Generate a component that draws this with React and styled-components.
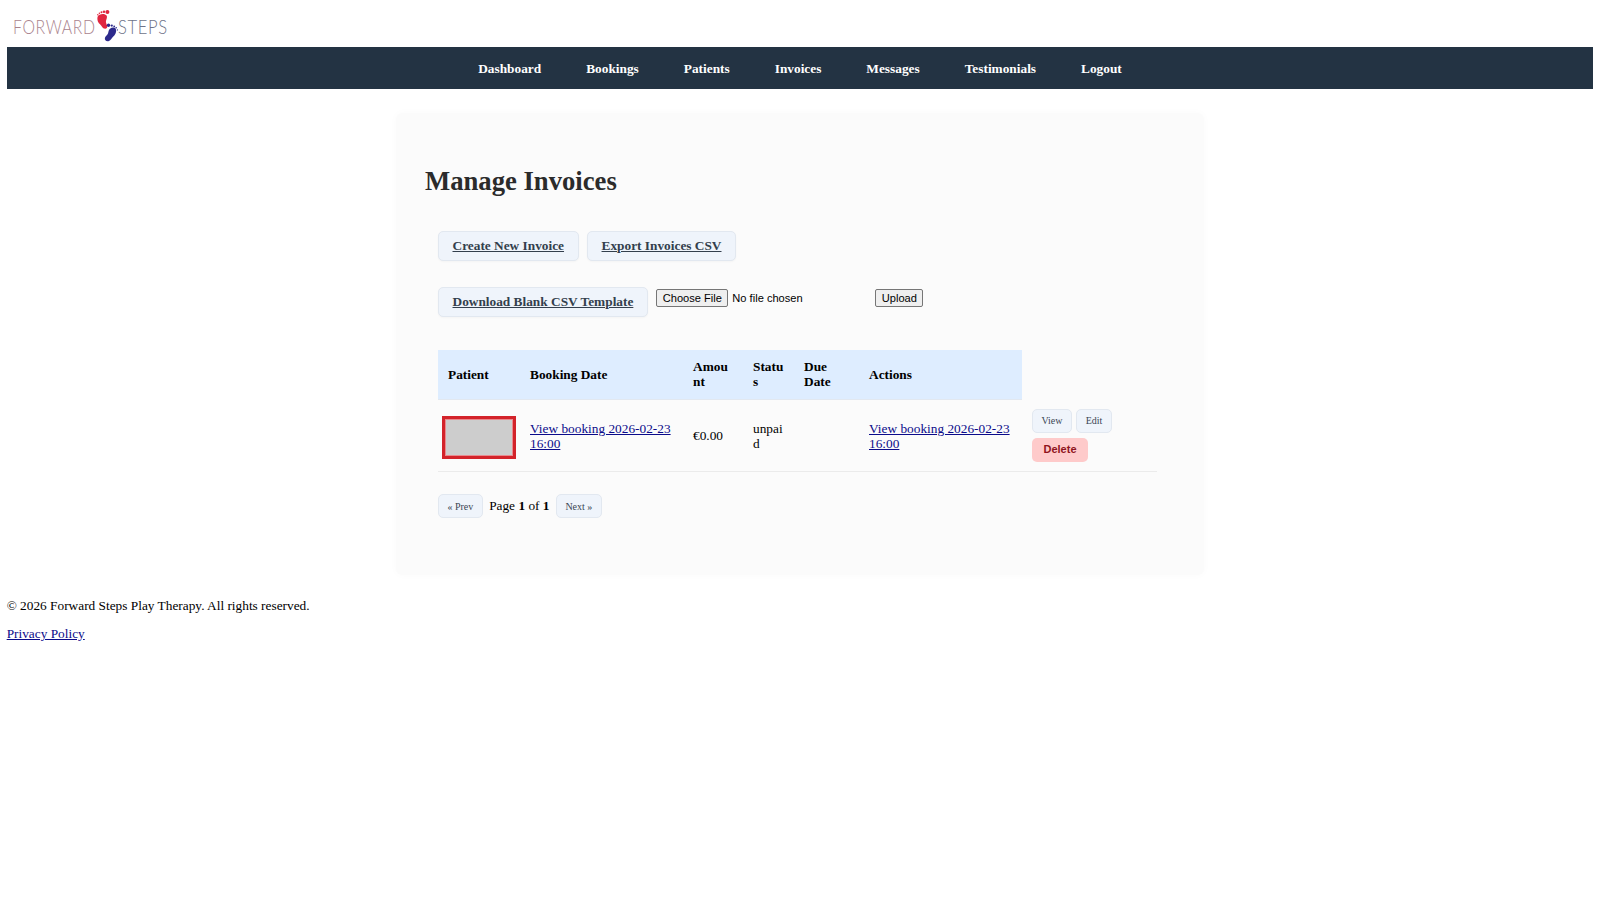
import React from 'react';
import styled, { createGlobalStyle } from 'styled-components';

const GlobalStyle = createGlobalStyle`
  html, body {
    margin: 0;
    padding: 0;
    background: #fff;
  }
  body {
    padding: 0 6.67px;
    font-family: "Liberation Serif", "Times New Roman", serif;
    font-size: 13.33px;
    color: #000;
  }
  a {
    color: #0b0b8a;
  }
`;

const Brand = styled.header`
  height: 47px;
  display: flex;
  align-items: flex-start;
  padding-left: 6px;
`;

const BrandWord = styled.span`
  display: block;
  width: ${p => p.$width};
  flex: none;
  font-family: Lato, "Open Sans", sans-serif;
  font-weight: 300;
  font-size: 20px;
  line-height: 20px;
  letter-spacing: 0.8px;
  white-space: nowrap;
  margin-top: 16px;
  color: ${p => p.$color};
  transform: scaleX(${p => p.$squeeze});
  transform-origin: left center;
`;

const BrandFeet = styled.svg`
  width: 22px;
  height: 34px;
  margin-top: 9px;
  flex: none;
`;

const Nav = styled.nav`
  height: 42px;
  background: #233343;
  display: flex;
  justify-content: center;
  align-items: center;
  padding-top: 1px;
  box-sizing: border-box;
  gap: 45px;
`;

const NavItem = styled.a`
  color: #fff;
  font-weight: 700;
  font-size: 13.33px;
  text-decoration: none;
`;

const Panel = styled.main`
  box-sizing: border-box;
  width: 808px;
  height: 462px;
  margin: 24px auto 0;
  padding: 52px 30px 0;
  background: #fbfbfb;
  box-shadow: 0 0 8px rgba(0, 0, 0, 0.025);
  border-radius: 6px;
`;

const Title = styled.h1`
  margin: 0 0 0 -1px;
  font-size: 26.67px;
  line-height: 32px;
  font-weight: 700;
  color: #2b2b2b;
`;

const Actions = styled.div`
  margin: ${p => p.$top} 0 0 12px;
  display: flex;
  gap: 8.5px;
  align-items: flex-start;
`;

const LinkButton = styled.a`
  box-sizing: border-box;
  height: 30px;
  padding: 0 13.5px;
  display: inline-flex;
  align-items: center;
  background: #eff4fb;
  border: 1px solid #e2e8f0;
  border-radius: 5px;
  color: #333f4d;
  font-weight: 700;
  font-size: 13.33px;
  text-decoration: underline;
  box-shadow: 0 1px 2px rgba(0, 0, 0, 0.03);
`;

const UploadForm = styled.form`
  display: flex;
  align-items: flex-start;
  padding-top: 2px;
`;

const FileInput = styled.input`
  width: 219px;
  font-family: "Liberation Sans", Arial, sans-serif;
  font-size: 11.1px;
  color: #000;

  &::file-selector-button {
    font-family: "Liberation Sans", Arial, sans-serif;
    font-size: 11.1px;
    height: 18px;
    width: 72px;
    padding: 0;
    margin-right: 4px;
    background: #efefef;
    border: 1px solid #767676;
    border-radius: 2px;
    color: #000;
  }
`;

const UploadButton = styled.button`
  box-sizing: border-box;
  width: 48px;
  height: 18px;
  padding: 0;
  font-family: "Liberation Sans", Arial, sans-serif;
  font-size: 11.1px;
  background: #efefef;
  border: 1px solid #767676;
  border-radius: 2px;
  color: #000;
`;

const Table = styled.table`
  table-layout: fixed;
  border-collapse: collapse;
  width: 719px;
  margin: 32.5px 0 0 12px;
`;

const HeadCell = styled.th`
  height: 50px;
  padding: 0 10px;
  box-sizing: border-box;
  background: #deedff;
  border-bottom: 1px solid #e2e8f0;
  text-align: left;
  vertical-align: middle;
  font-size: 13.33px;
  line-height: 15px;
  font-weight: 700;
  color: #000;
  word-break: ${p => (p.$tight ? 'break-all' : 'normal')};
`;

const BlankHead = styled.th`
  padding: 0;
`;

const Cell = styled.td`
  height: 72px;
  padding: 0 10px;
  box-sizing: border-box;
  border-bottom: 1px solid #ebebeb;
  vertical-align: middle;
  font-size: 13.33px;
  line-height: 15px;
  word-break: ${p => (p.$tight ? 'break-all' : 'normal')};
`;

const PatientCell = styled(Cell)`
  padding: 3px 4px 0;
`;

const Placeholder = styled.div`
  box-sizing: border-box;
  width: 74px;
  height: 43px;
  background: #cdcdcd;
  border: 3px solid #d3232a;
  box-shadow: inset 0 0 0 1px #e98a8e;
`;

const RowTools = styled.div`
  display: flex;
  flex-wrap: wrap;
  gap: 5px 4.5px;
  width: 90px;
`;

const SmallButton = styled.a`
  box-sizing: border-box;
  height: 24px;
  padding: 0 8.4px;
  display: inline-flex;
  align-items: center;
  background: #eff4fb;
  border: 1px solid #e2e8f0;
  border-radius: 5px;
  font-size: 10px;
  color: #3b4654;
  text-decoration: none;
`;

const DangerButton = styled.a`
  box-sizing: border-box;
  width: 56px;
  height: 24px;
  display: inline-flex;
  align-items: center;
  justify-content: center;
  background: #fecaca;
  border-radius: 5px;
  font-family: "Liberation Sans", Arial, sans-serif;
  font-size: 11px;
  font-weight: 700;
  color: #8f1420;
`;

const Pager = styled.div`
  margin: 22px 0 0 12px;
  display: flex;
  align-items: center;
  gap: 6.5px;
  font-size: 13.33px;
`;

const Footer = styled.footer`
  margin-top: 23px;
  font-size: 13.33px;
  line-height: 15px;
`;

const FooterLine = styled.p`
  margin: 0 0 13px;
`;

const navItems = ['Dashboard', 'Bookings', 'Patients', 'Invoices', 'Messages', 'Testimonials', 'Logout'];
const colWidths = [82, 163, 60, 51, 65, 163, 135];

function Feet() {
  return (
    <BrandFeet viewBox="0 0 22 34" aria-hidden="true">
      <g fill="#e0263f">
        <path d="M1.6 7.8 C2.6 4.6 9 4 10.6 6.6 C11.8 8.8 9.6 11.2 10 13.6 C10.4 15.6 12 17 11 18.8 C9.8 20.6 7 19.8 6 17.8 C5 15.8 3 15 2 12.8 C1.4 11.2 1.2 9.2 1.6 7.8 Z" />
        <circle cx="11.4" cy="2.9" r="2" />
        <circle cx="8" cy="2.8" r="1.2" />
        <circle cx="5.5" cy="3.2" r="1" />
        <circle cx="3.4" cy="4.3" r="0.8" />
        <circle cx="1.8" cy="5.8" r="0.7" />
      </g>
      <g fill="#2d2a8c">
        <path d="M19.8 20 C21 23 19 26.2 16.8 28 C15.6 29 15.2 31 13 32 C10.4 32.8 8.4 31.2 8.9 29 C9.3 27.2 11.2 26.4 12 24.6 C12.6 23 12.4 21.2 14 19.8 C15.8 18.2 18.8 18 19.8 20 Z" />
        <circle cx="12.5" cy="16.2" r="1.7" />
        <circle cx="15.8" cy="16.6" r="1.1" />
        <circle cx="18.2" cy="17.3" r="0.9" />
        <circle cx="20.2" cy="18.8" r="0.8" />
        <circle cx="21.4" cy="20.9" r="0.6" />
      </g>
    </BrandFeet>
  );
}

export default function App() {
  return (
    <>
      <GlobalStyle />
      <Brand>
        <BrandWord $color="#a9838d" $width="83px" $squeeze="0.79">FORWARD</BrandWord>
        <Feet />
        <BrandWord $color="#6e7389" $width="50px" $squeeze="0.83">STEPS</BrandWord>
      </Brand>
      <Nav>
        {navItems.map(item => <NavItem key={item} href="#">{item}</NavItem>)}
      </Nav>
      <Panel>
        <Title>Manage Invoices</Title>
        <Actions $top="34px">
          <LinkButton href="#">Create New Invoice</LinkButton>
          <LinkButton href="#">Export Invoices CSV</LinkButton>
        </Actions>
        <Actions $top="26px">
          <LinkButton href="#">Download Blank CSV Template</LinkButton>
          <UploadForm onSubmit={e => e.preventDefault()}>
            <FileInput type="file" />
            <UploadButton type="submit">Upload</UploadButton>
          </UploadForm>
        </Actions>
        <Table>
          <colgroup>
            {colWidths.map((w, i) => <col key={i} width={w} />)}
          </colgroup>
          <thead>
            <tr>
              <HeadCell>Patient</HeadCell>
              <HeadCell>Booking Date</HeadCell>
              <HeadCell $tight>Amount</HeadCell>
              <HeadCell $tight>Status</HeadCell>
              <HeadCell>Due Date</HeadCell>
              <HeadCell>Actions</HeadCell>
              <BlankHead />
            </tr>
          </thead>
          <tbody>
            <tr>
              <PatientCell><Placeholder /></PatientCell>
              <Cell><a href="#">View booking 2026-02-23 16:00</a></Cell>
              <Cell>€0.00</Cell>
              <Cell $tight>unpaid</Cell>
              <Cell />
              <Cell><a href="#">View booking 2026-02-23 16:00</a></Cell>
              <Cell>
                <RowTools>
                  <SmallButton href="#">View</SmallButton>
                  <SmallButton href="#">Edit</SmallButton>
                  <DangerButton>Delete</DangerButton>
                </RowTools>
              </Cell>
            </tr>
          </tbody>
        </Table>
        <Pager>
          <SmallButton href="#">« Prev</SmallButton>
          <span>Page <b>1</b> of <b>1</b></span>
          <SmallButton href="#">Next »</SmallButton>
        </Pager>
      </Panel>
      <Footer>
        <FooterLine>© 2026 Forward Steps Play Therapy. All rights reserved.</FooterLine>
        <FooterLine><a href="#">Privacy Policy</a></FooterLine>
      </Footer>
    </>
  );
}
